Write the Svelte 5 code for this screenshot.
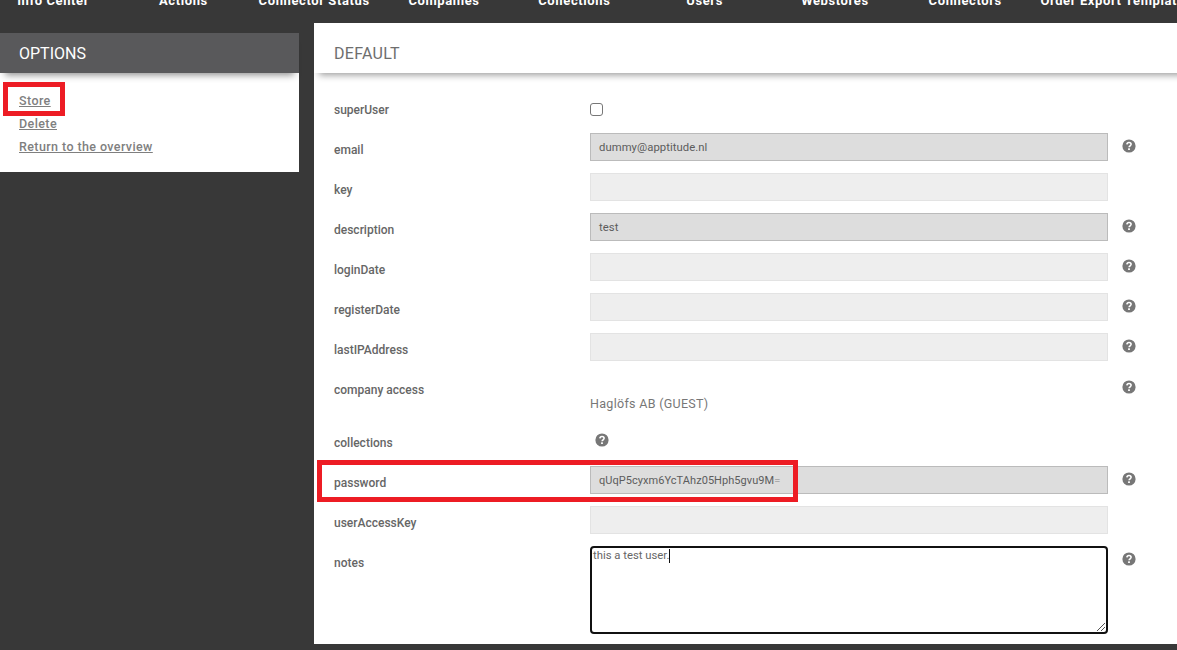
<script>
    const nav = ['Info Center', 'Actions', 'Connector Status', 'Companies', 'Collections', 'Users', 'Webstores', 'Connectors', 'Order Export Templates'];
    const plainRows = [
        { label: 'email', value: 'dummy@apptitude.nl', dark: true, help: true },
        { label: 'key', value: '', dark: false, help: false },
        { label: 'description', value: 'test', dark: true, help: true },
        { label: 'loginDate', value: '', dark: false, help: true },
        { label: 'registerDate', value: '', dark: false, help: true },
        { label: 'lastIPAddress', value: '', dark: false, help: true }
    ];
</script>

{#snippet help()}
    <svg class="help" viewBox="0 0 14 14" width="14" height="14" aria-hidden="true">
        <circle cx="7" cy="7" r="6.6" fill="#777" />
        <path d="M4.9 5.4c.1-1.2 1-1.9 2.1-1.9 1.2 0 2.1.8 2.1 1.8 0 1.5-2 1.5-2 3" fill="none" stroke="#fff" stroke-width="1.6" />
        <rect x="6.1" y="9.3" width="1.8" height="1.7" fill="#fff" />
    </svg>
{/snippet}

<div class="page">
    <nav class="topnav">
        {#each nav as item}
            <a href="#top" class="navitem">{item}</a>
        {/each}
    </nav>

    <div class="content">
        <aside class="side">
            <h2 class="side-title">OPTIONS</h2>
            <ul class="side-menu">
                <li><a href="#store">Store</a></li>
                <li><a href="#delete">Delete</a></li>
                <li><a href="#overview">Return to the overview</a></li>
            </ul>
        </aside>

        <main class="panel">
            <h2 class="panel-title">DEFAULT</h2>
            <form class="form">
                <div class="row check-row">
                    <span class="label">superUser</span>
                    <span class="field"><span class="checkbox"></span></span>
                </div>

                {#each plainRows as row}
                    <div class="row">
                        <span class="label">{row.label}</span>
                        <div class="input" class:dark={row.dark}>{row.value}</div>
                        {#if row.help}{@render help()}{/if}
                    </div>
                {/each}

                <div class="row company-row">
                    <span class="label">company access</span>
                    <div class="company">Haglöfs AB (GUEST)</div>
                    {@render help()}
                </div>

                <div class="row collections-row">
                    <span class="label">collections</span>
                    <div class="field">{@render help()}</div>
                </div>

                <div class="row">
                    <span class="label">password</span>
                    <div class="input dark secret">qUqP5cyxm6YcTAhz05Hph5gvu9M<span class="fade">=</span></div>
                    {@render help()}
                </div>

                <div class="row">
                    <span class="label">userAccessKey</span>
                    <div class="input"></div>
                </div>

                <div class="row notes-row">
                    <span class="label">notes</span>
                    <div class="textarea">
                        this a test user.<span class="caret"></span>
                        <svg class="grip" viewBox="0 0 10 10" width="10" height="10" aria-hidden="true">
                            <path d="M9 1 1 9M9 5 5 9" stroke="#555" stroke-width="1" fill="none" />
                        </svg>
                    </div>
                    {@render help()}
                </div>
            </form>
        </main>
    </div>

    <div class="mark mark-store"></div>
    <div class="mark mark-password"></div>
</div>

<style>
    :global(body) {
        margin: 0;
        background: #383838;
    }

    .page {
        position: relative;
        width: 1177px;
        height: 650px;
        overflow: hidden;
        background: #383838;
        font-family: Roboto, "Liberation Sans", sans-serif;
    }

    .topnav {
        display: grid;
        grid-auto-flow: column;
        grid-auto-columns: 130.3px;
        height: 23px;
        margin-left: -12px;
        overflow: hidden;
    }

    .navitem {
        padding: 0 10px;
        margin-top: -8px;
        color: #fff;
        font-size: 13px;
        font-weight: 700;
        line-height: 18px;
        letter-spacing: 0.6px;
        text-align: center;
        text-decoration: none;
        white-space: nowrap;
    }

    .content {
        display: flex;
        align-items: flex-start;
    }

    .side {
        flex: 0 0 299px;
        margin-top: 10px;
    }

    .side-title {
        position: relative;
        height: 40px;
        margin: 0;
        padding-left: 19px;
        background: #59595b;
        box-shadow: 0 7px 7px -5px rgba(0, 0, 0, 0.45);
        color: #fff;
        font-size: 16px;
        font-weight: 400;
        line-height: 42px;
    }

    .side-menu {
        height: 84px;
        margin: 0;
        padding: 15px 0 0 19px;
        list-style: none;
        background: #fff;
    }

    .side-menu li {
        height: 23px;
        line-height: 23px;
    }

    .side-menu a {
        color: #7f7f7f;
        font-size: 12.5px;
        font-weight: 500;
        letter-spacing: 0.4px;
    }

    .panel {
        flex: 0 0 863px;
        height: 621px;
        margin-left: 15px;
        padding-top: 10px;
        box-sizing: border-box;
        background: #fff;
        overflow: hidden;
    }

    .panel-title {
        height: 40px;
        margin: 0 -12px 0 0;
        padding-left: 20px;
        background: #fff;
        box-shadow: 0 7px 7px -5px rgba(0, 0, 0, 0.4);
        color: #6e6e6e;
        font-size: 16px;
        font-weight: 400;
        letter-spacing: 0.3px;
        line-height: 42px;
    }

    .form {
        padding: 20px 0 0 20px;
    }

    .row {
        display: grid;
        grid-template-columns: 256px 518px 14px;
        column-gap: 0;
        align-items: start;
        height: 40px;
    }

    .label {
        padding-top: 9px;
        color: #666;
        font-size: 12px;
        font-weight: 500;
        letter-spacing: 0;
        line-height: 17px;
    }

    .input {
        box-sizing: border-box;
        height: 28px;
        padding-left: 8px;
        border: 1px solid #e3e3e3;
        background: #eee;
        color: #5c5c5c;
        font-size: 11.3px;
        font-weight: 400;
        letter-spacing: 0.05px;
        line-height: 27px;
    }

    .input.dark {
        border-color: #bbb;
        background: #ddd;
    }

    .input.secret {
        font-size: 11px;
    }

    .fade {
        color: #aaa;
    }

    .help {
        display: block;
        margin: 6px 0 0 14px;
        grid-column: 3;
    }

    .field .help {
        margin: 0 0 0 5px;
    }

    .checkbox {
        display: block;
        box-sizing: border-box;
        width: 13px;
        height: 13px;
        margin-top: 10px;
        border: 1px solid #777;
        border-radius: 3px;
        background: #fff;
    }

    .company-row {
        height: 53px;
    }

    .company {
        padding-top: 23px;
        color: #777;
        font-size: 12.5px;
        font-weight: 400;
        letter-spacing: 0.3px;
        line-height: 16px;
    }

    .company-row .help {
        margin-top: 7px;
    }

    .collections-row .field {
        padding-top: 7px;
    }

    .notes-row {
        height: 88px;
    }

    .textarea {
        position: relative;
        box-sizing: border-box;
        height: 88px;
        padding: 1px 1px;
        border: 2px solid #111;
        border-radius: 4px;
        background: #fff;
        color: #666;
        font-size: 11.3px;
        font-weight: 400;
        letter-spacing: 0;
        line-height: 14px;
    }

    .caret {
        display: inline-block;
        width: 1px;
        height: 14px;
        vertical-align: top;
        background: #111;
    }

    .grip {
        position: absolute;
        right: 0;
        bottom: 0;
    }

    .mark {
        position: absolute;
        box-sizing: border-box;
        border: 5px solid #ed1c24;
    }

    .mark-store {
        left: 3px;
        top: 82px;
        width: 62px;
        height: 34px;
    }

    .mark-password {
        left: 317px;
        top: 460px;
        width: 481px;
        height: 42px;
    }
</style>
